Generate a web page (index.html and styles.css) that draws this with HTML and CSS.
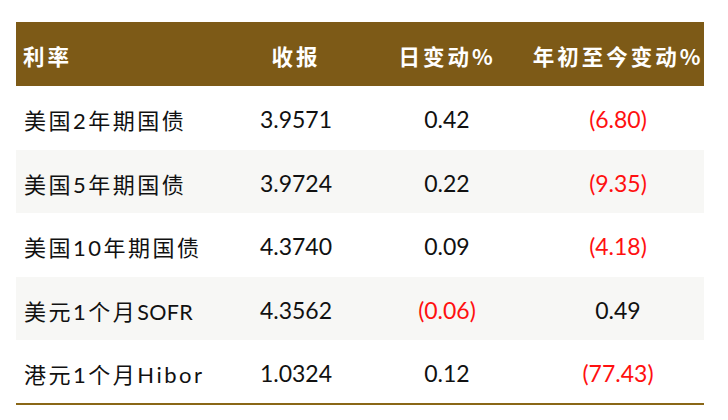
FILE: index.html
```html
<!DOCTYPE html>
<html lang="zh-CN">
<head>
<meta charset="utf-8">
<link rel="stylesheet" href="styles.css">
</head>
<body>
<table class="rates">
  <colgroup>
    <col class="c1"><col class="c2"><col class="c3"><col class="c4">
  </colgroup>
  <thead>
    <tr><th class="name">利率</th><th>收报</th><th>日变动%</th><th>年初至今变动%</th></tr>
  </thead>
  <tbody>
    <tr><td class="name">美国2年期国债</td><td class="num">3.9571</td><td class="num">0.42</td><td class="num neg">(6.80)</td></tr>
    <tr class="alt"><td class="name">美国5年期国债</td><td class="num">3.9724</td><td class="num">0.22</td><td class="num neg">(9.35)</td></tr>
    <tr><td class="name">美国10年期国债</td><td class="num">4.3740</td><td class="num">0.09</td><td class="num neg">(4.18)</td></tr>
    <tr class="alt"><td class="name">美元1个月<span class="tight">SOFR</span></td><td class="num">4.3562</td><td class="num neg">(0.06)</td><td class="num">0.49</td></tr>
    <tr><td class="name">港元1个月Hibor</td><td class="num">1.0324</td><td class="num">0.12</td><td class="num neg">(77.43)</td></tr>
  </tbody>
</table>
</body>
</html>
```
FILE: styles.css
```css
html, body {
  margin: 0;
  background: #ffffff;
}
body {
  padding: 22px 0 0 16px;
  font-family: "Noto Sans CJK SC", "Noto Sans", sans-serif;
}
.rates {
  width: 688px;
  border-collapse: collapse;
  table-layout: fixed;
  border-bottom: 2.5px solid #8a6717;
}
.c1 { width: 214px; }
.c2 { width: 132px; }
.c3 { width: 170px; }
.c4 { width: 172px; }
.rates thead tr {
  background: #7d5a17;
  height: 64px;
}
.rates th {
  color: #ffffff;
  font-weight: 700;
  font-size: 21.5px;
  letter-spacing: 3px;
  text-align: center;
  padding: 2px 0 0 0;
  white-space: nowrap;
}
.rates th.name {
  text-align: left;
  padding-left: 7px;
}
.rates tbody tr {
  height: 63.6px;
}
.rates tbody tr.alt {
  background: #f7f7f5;
}
.rates td {
  padding: 3px 0 0 0;
  color: #111111;
  white-space: nowrap;
}
.rates td.name {
  padding-left: 8px;
  font-size: 22px;
  letter-spacing: 2.5px;
  font-family: "Lato", "Noto Sans CJK SC", sans-serif;
}
.rates td.name .tight {
  letter-spacing: 0.3px;
  font-size: 21.5px;
}
.rates td.num {
  text-align: center;
  font-family: "Lato", sans-serif;
  font-size: 23px;
}
.rates td.neg {
  color: #ff1010;
}
```
